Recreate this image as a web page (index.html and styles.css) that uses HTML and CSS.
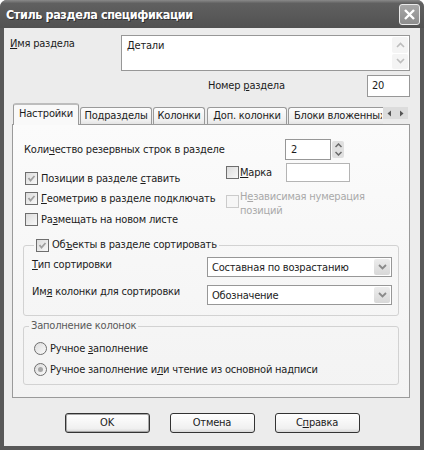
FILE: index.html
```html
<!doctype html>
<html lang="ru">
  <head>
    <meta charset="UTF-8">
    <title>Стиль раздела спецификации</title>
    <link rel="stylesheet" href="styles.css">
  </head>
  <body>
    <div class="window">
      <div class="titlebar">
        <span class="title">Стиль раздела спецификации</span>
        <span class="closeBtn">
          <svg width="13" height="13" viewBox="0 0 13 13"><path d="M2 2 L11 11 M11 2 L2 11" stroke="#fff" stroke-width="2.4"/></svg>
        </span>
      </div>

      <div class="client">
        <div class="nameRow">
          <div class="nameLabel"><u>И</u>мя раздела</div>
          <div class="memo">
            <div class="memoText">Детали</div>
            <div class="memoScroll">
              <span class="scrollBtn"><svg width="9" height="6" viewBox="0 0 9 6"><path d="M1 5 L4.5 1.5 L8 5" fill="none" stroke="#bdbdbd" stroke-width="1.6"/></svg></span>
              <span class="scrollBtn"><svg width="9" height="6" viewBox="0 0 9 6"><path d="M1 1 L4.5 4.5 L8 1" fill="none" stroke="#bdbdbd" stroke-width="1.6"/></svg></span>
            </div>
          </div>
        </div>

        <div class="numRow">
          <div class="numLabel">Номер <u>р</u>аздела</div>
          <div class="edit numEdit">20</div>
        </div>

        <div class="tabStrip">
          <div class="tab active">Настройки</div>
          <div class="tab w72">Подразделы</div>
          <div class="tab w52">Колонки</div>
          <div class="tab w80">Доп. колонки</div>
          <div class="tab clipped"><span class="tabClip">Блоки вложенных</span></div>
          <div class="tabArrows">
            <svg width="5" height="7" viewBox="0 0 5 7"><path d="M4 0.5 L0.5 3.5 L4 6.5 Z" fill="#555"/></svg>
            <svg width="5" height="7" viewBox="0 0 5 7"><path d="M1 0.5 L4.5 3.5 L1 6.5 Z" fill="#555"/></svg>
          </div>
        </div>

        <div class="pane">
          <div class="qtyRow">
            <div class="qtyLabel">Коли<u>ч</u>ество резервных строк в разделе</div>
            <div class="edit qtyEdit">2</div>
            <div class="spin">
              <svg width="7" height="5" viewBox="0 0 7 5"><path d="M0.5 4 L3.5 1 L6.5 4" fill="none" stroke="#6a6a6a" stroke-width="1.5"/></svg>
              <svg width="7" height="5" viewBox="0 0 7 5"><path d="M0.5 1 L3.5 4 L6.5 1" fill="none" stroke="#6a6a6a" stroke-width="1.5"/></svg>
            </div>
          </div>

          <div class="optCols">
            <div class="optLeft">
              <div class="check">
                <span class="box"><svg width="11" height="11" viewBox="0 0 11 11"><path d="M2.5 5 L4.5 7.5 L8.5 3" fill="none" stroke="#a0a0a0" stroke-width="1.8"/></svg></span>
                <span>Позиции в разделе <u>с</u>тавить</span>
              </div>
              <div class="check">
                <span class="box"><svg width="11" height="11" viewBox="0 0 11 11"><path d="M2.5 5 L4.5 7.5 L8.5 3" fill="none" stroke="#a0a0a0" stroke-width="1.8"/></svg></span>
                <span><u>Г</u>еометрию в разделе подключать</span>
              </div>
              <div class="check">
                <span class="box"></span>
                <span>Ра<u>з</u>мещать на новом листе</span>
              </div>
            </div>
            <div class="optRight">
              <div class="markRow">
                <span class="box"></span>
                <span class="markLabel"><u>М</u>арка</span>
                <div class="edit markEdit"></div>
              </div>
              <div class="check multi disabled">
                <span class="box"></span>
                <span>Н<u>е</u>зависимая нумерация<br>позиций</span>
              </div>
            </div>
          </div>

          <fieldset class="group sortGroup">
            <legend class="check">
              <span class="box"><svg width="11" height="11" viewBox="0 0 11 11"><path d="M2.5 5 L4.5 7.5 L8.5 3" fill="none" stroke="#a0a0a0" stroke-width="1.8"/></svg></span>
              <span>Об<u>ъ</u>екты в разделе сортировать</span>
            </legend>
            <div class="fieldRow">
              <div class="fieldLabel"><u>Т</u>ип сортировки</div>
              <div class="combo">
                <span class="comboText">Составная по возрастанию</span>
                <span class="comboBtn"><svg width="9" height="6" viewBox="0 0 9 6"><path d="M1 1 L4.5 4.5 L8 1" fill="none" stroke="#8a8a8a" stroke-width="1.8"/></svg></span>
              </div>
            </div>
            <div class="fieldRow second">
              <div class="fieldLabel">Им<u>я</u> колонки для сортировки</div>
              <div class="combo">
                <span class="comboText">Обозначение</span>
                <span class="comboBtn"><svg width="9" height="6" viewBox="0 0 9 6"><path d="M1 1 L4.5 4.5 L8 1" fill="none" stroke="#8a8a8a" stroke-width="1.8"/></svg></span>
              </div>
            </div>
          </fieldset>

          <fieldset class="group fillGroup">
            <legend class="groupCaption">Заполнение колонок</legend>
            <div class="radio"><span class="dot"></span><span>Ручное <u>з</u>аполнение</span></div>
            <div class="radio"><span class="dot on"></span><span>Ручное заполнение и<u>л</u>и чтение из основной надписи</span></div>
          </fieldset>
        </div>

        <div class="buttons">
          <div class="btn default">OK</div>
          <div class="btn">Отмена</div>
          <div class="btn">С<u>п</u>равка</div>
        </div>
      </div>
    </div>
  </body>
</html>
```

FILE: styles.css
```css
body{
  margin: 0;
  background: #fff;
  font-family: "DejaVu Sans Condensed", "DejaVu Sans", sans-serif;
  font-size: 11px;
  letter-spacing: -0.2px;
  color: #1c1c1c;
}

u{
  text-underline-offset: 1px;
}

.window{
  width: 424px;
  height: 450px;
  box-sizing: border-box;
  padding: 0 4px 4px;
  background: #585858;
  border-radius: 7px 7px 0 0;
  display: flex;
  flex-direction: column;
}

.titlebar{
  height: 28px;
  margin: 0 -4px;
  padding: 0 4px 0 6px;
  display: flex;
  align-items: center;
  justify-content: space-between;
  background: linear-gradient(#8a8a8a, #606060 12%, #585858 60%, #515151);
  border-radius: 7px 7px 0 0;
}

.title{
  color: #fff;
  font-weight: bold;
  font-size: 12.5px;
  letter-spacing: -0.4px;
  text-shadow: 1px 1px #2e2e2e;
}

.closeBtn{
  width: 21px;
  height: 21px;
  box-sizing: border-box;
  border: 1px solid #eaeaea;
  border-radius: 3px;
  background: linear-gradient(#a8a8a8, #8c8c8c);
  display: flex;
  align-items: center;
  justify-content: center;
}

.client{
  flex: 1;
  background: #ececec;
  padding: 0 10px 0 6px;
  display: flex;
  flex-direction: column;
}

/* name + number */
.nameRow{
  display: flex;
  margin-top: 7px;
}
.nameLabel{
  width: 111px;
  padding-top: 2px;
}
.memo{
  width: 289px;
  height: 36px;
  box-sizing: border-box;
  border: 1px solid #979797;
  background: #fff;
  display: flex;
  justify-content: space-between;
}
.memoText{
  padding: 3px 5px;
  line-height: 14px;
}
.memoScroll{
  width: 16px;
  display: flex;
  flex-direction: column;
  gap: 1px;
  padding: 1px 1px 1px 0;
}
.scrollBtn{
  flex: 1;
  background: #f4f4f4;
  border-radius: 2px;
  display: flex;
  align-items: center;
  justify-content: center;
}

.numRow{
  display: flex;
  margin-top: 4px;
  padding-left: 198px;
}
.numLabel{
  width: 159px;
  line-height: 22px;
}
.edit{
  box-sizing: border-box;
  border: 1px solid #979797;
  background: #fff;
}
.numEdit{
  width: 43px;
  height: 22px;
  line-height: 20px;
  padding-left: 4px;
}

/* tabs */
.tabStrip{
  display: flex;
  align-items: flex-end;
  height: 21px;
  margin-top: 6px;
  margin-left: 3px;
}
.tab{
  height: 17px;
  box-sizing: border-box;
  margin-right: 1px;
  border: 1px solid #9a9a9a;
  border-bottom: none;
  border-radius: 3px 3px 0 0;
  background: linear-gradient(#fdfdfd, #efefef 80%, #e4e4e4);
  line-height: 15px;
  text-align: center;
  white-space: nowrap;
}
.tab.active{
  position: relative;
  width: 66px;
  height: 22px;
  margin-bottom: -1px;
  background: #f9f9f9;
  border-top: 2px solid #bdbdbd;
  line-height: 17px;
}
.w72{ width: 72px; }
.w52{ width: 52px; margin-right: 2px; }
.w80{ width: 80px; }
.clipped{
  width: 95px;
  margin-right: 0;
  padding-left: 5px;
  text-align: left;
  overflow: hidden;
  border-right: none;
  border-radius: 3px 0 0 0;
}
.tabClip{
  display: inline-block;
  width: 88px;
  overflow: hidden;
  vertical-align: top;
}
.tabArrows{
  align-self: flex-start;
  margin-top: 4px;
  width: 25px;
  height: 12px;
  background: #dcdcdc;
  display: flex;
  align-items: center;
  justify-content: space-around;
}

/* tab pane */
.pane{
  width: 398px;
  height: 274px;
  box-sizing: border-box;
  margin-left: 2px;
  padding: 0 10px;
  border: 1px solid #9a9a9a;
  background: linear-gradient(#fbfbfb, #f3f3f3);
}

.qtyRow{
  display: flex;
  align-items: center;
  margin-top: 14px;
  height: 21px;
}
.qtyLabel{
  width: 261px;
  padding-left: 1px;
}
.qtyEdit{
  width: 46px;
  height: 21px;
  line-height: 19px;
  padding-left: 5px;
}
.spin{
  width: 12px;
  height: 17px;
  margin-left: 1px;
  border-radius: 2px;
  background: #e0e0e0;
  display: flex;
  flex-direction: column;
  align-items: center;
  justify-content: space-around;
}

.optCols{
  display: flex;
}
.optLeft{
  width: 203px;
  padding-top: 8px;
}
.optLeft .check{
  height: 20px;
}
.optLeft .check:last-child{
  margin-top: 1px;
}
.check{
  display: flex;
  align-items: center;
  margin-left: 2px;
}
.box{
  width: 13px;
  height: 13px;
  box-sizing: border-box;
  margin-right: 3px;
  border: 1px solid #6e6e6e;
  background: linear-gradient(135deg, #dcdcdc, #f8f8f8);
  display: flex;
  align-items: center;
  justify-content: center;
  flex: none;
}
.optRight{
  padding-top: 3px;
}
.markRow{
  display: flex;
  align-items: center;
  height: 19px;
}
.markRow .box{
  margin-right: 1px;
}
.markLabel{
  width: 46px;
}
.markEdit{
  width: 64px;
  height: 19px;
  border-color: #b4b4b4;
}
.check.multi{
  margin: 8px 0 0;
  align-items: flex-start;
  line-height: 14px;
}
.check.multi .box{
  margin-top: 5px;
  margin-right: 1px;
}
.disabled{
  color: #a9a9a9;
}
.disabled .box{
  border-color: #cbcbcb;
  background: #f6f6f6;
}

/* group boxes */
.group{
  margin: 0;
  min-width: 0;
  border: 1px solid #d2d2d2;
  border-radius: 3px;
}
.group legend{
  padding: 0 2px;
  line-height: 14px;
}
.sortGroup{
  margin-top: 9px;
  padding: 0 6px 10px 8px;
}
.fieldRow{
  display: flex;
  margin-top: 5px;
}
.fieldRow.second{
  margin-top: 8px;
}
.fieldLabel{
  width: 175px;
  line-height: 14px;
  padding-top: 1px;
}
.fieldRow.second .fieldLabel{
  padding-top: 0;
}
.combo{
  width: 185px;
  height: 20px;
  box-sizing: border-box;
  border: 1px solid #979797;
  background: #fff;
  display: flex;
  align-items: center;
  justify-content: space-between;
}
.comboText{
  padding-left: 4px;
}
.comboBtn{
  width: 16px;
  height: 16px;
  margin-right: 1px;
  border-radius: 2px;
  background: linear-gradient(#ececec, #d8d8d8);
  display: flex;
  align-items: center;
  justify-content: center;
}

.fillGroup{
  margin-top: 3px;
  padding: 0 6px 5px 8px;
}
.groupCaption{
  margin-left: -3px;
  color: #5a5a5a;
}
.radio{
  display: flex;
  align-items: center;
  height: 20px;
  margin-left: 2px;
}
.radio:first-of-type{
  margin-top: 5px;
}
.radio + .radio{
  margin-top: 1px;
}
.dot{
  width: 13px;
  height: 13px;
  box-sizing: border-box;
  margin-right: 3px;
  border: 1px solid #6e6e6e;
  border-radius: 50%;
  background: linear-gradient(135deg, #dcdcdc, #fafafa);
  display: flex;
  align-items: center;
  justify-content: center;
}
.dot.on::after{
  content: "";
  width: 5px;
  height: 5px;
  border-radius: 50%;
  background: #a6a6a6;
}

/* dialog buttons */
.buttons{
  display: flex;
  justify-content: center;
  gap: 20px;
  margin-top: 15px;
  padding-left: 4px;
}
.btn{
  width: 85px;
  height: 20px;
  box-sizing: border-box;
  border: 1px solid #333;
  border-radius: 3px;
  background: linear-gradient(#ffffff, #f0f0f0 80%, #d8d8d8);
  text-align: center;
  line-height: 18px;
}
.btn.default{
  box-shadow: inset 0 0 0 1px #a8a8a8;
}
```
